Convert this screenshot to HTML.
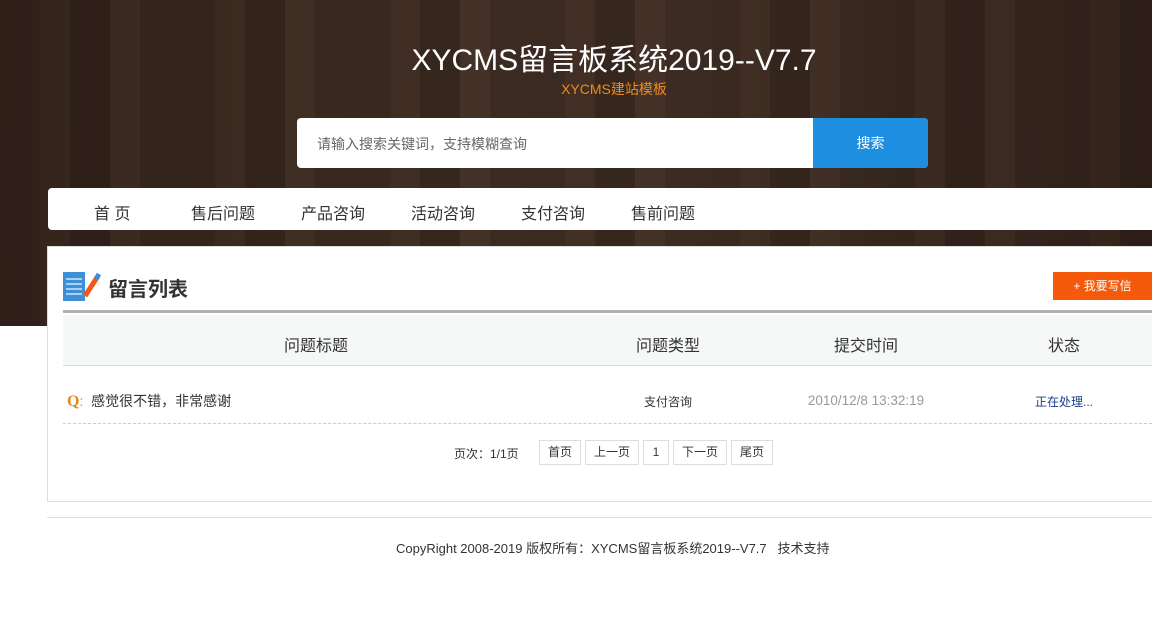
<!DOCTYPE html>
<html><head><meta charset="utf-8"><style>
*{margin:0;padding:0;box-sizing:border-box}
body{width:1152px;height:637px;background:#fff;font-family:"Liberation Sans","Noto Sans CJK SC",sans-serif;position:relative;overflow:hidden;color:#333}
.bg{position:absolute;left:0;top:0;width:1152px;height:326px;background:repeating-linear-gradient(90deg,#3a2a21 0 40px,#412f25 40px 70px,#36271e 70px 110px,#443228 110px 140px,#3b2b22 140px 175px);}
.bg:after{content:"";position:absolute;inset:0;background:linear-gradient(90deg,rgba(20,10,5,.3),rgba(0,0,0,0) 40%,rgba(0,0,0,0) 60%,rgba(20,10,5,.3))}
.t1{position:absolute;top:35px;left:0;width:1228px;text-align:center;color:#fff;font-size:30px}
.t2{position:absolute;top:79px;left:0;width:1228px;text-align:center;color:#f08a1c;font-size:14px}
.search{position:absolute;left:297px;top:118px;width:631px;height:50px;background:#fff;border-radius:4px;overflow:hidden}
.search span{position:absolute;left:20px;top:16px;font-size:14px;color:#666}
.search b{position:absolute;right:0;top:0;width:115px;height:50px;background:#1e8ee0;color:#fff;font-weight:normal;font-size:14px;text-align:center;line-height:50px}
.nav{position:absolute;left:48px;top:188px;width:1110px;height:42px;background:#fff;border-radius:4px}
.nav a{position:absolute;top:12px;font-size:16px;color:#333}
.box{position:absolute;left:47px;top:246px;width:1110px;height:256px;background:#fff;border:1px solid #ddd}
.ttl{position:absolute;left:60px;top:273px;font-size:20px;font-weight:bold;color:#333;padding-left:48px}
.btn{position:absolute;left:1053px;top:272px;width:99px;height:28px;background:#f55a0a;color:#fff;font-size:12px;line-height:28px;text-align:center}
.line{position:absolute;left:63px;top:310px;width:1089px;height:3px;background:#b0b0b0}
.th{position:absolute;left:63px;top:315px;width:1089px;height:51px;background:#f6f8f8;border-bottom:1px solid #ddd}
.th span,.row span{position:absolute;transform:translateX(-50%);white-space:nowrap}
.th span{top:17px;font-size:16px;color:#333}
.row{position:absolute;left:63px;top:367px;width:1089px;height:57px;border-bottom:1px dashed #ccc;font-size:12px}
.row span{top:26px}
.pg{position:absolute;top:440px;height:25px;border:1px solid #ddd;font-size:12px;line-height:23px;text-align:center;color:#333}
</style></head><body>
<div class="bg"></div>
<div class="t1">XYCMS留言板系统2019--V7.7</div>
<div class="t2">XYCMS建站模板</div>
<div class="search"><span>请输入搜索关键词，支持模糊查询</span><b>搜索</b></div>
<div class="nav"><a style="left:46px">首 页</a><a style="left:143px">售后问题</a><a style="left:253px">产品咨询</a><a style="left:363px">活动咨询</a><a style="left:473px">支付咨询</a><a style="left:583px">售前问题</a></div>
<div class="box"></div>
<svg style="position:absolute;left:63px;top:270px" width="38" height="32"><rect x="0" y="2" width="22" height="29" fill="#3d8fd8"/><g stroke="#cfe6ff" stroke-width="1.5"><line x1="3" y1="9" x2="19" y2="9"/><line x1="3" y1="14" x2="19" y2="14"/><line x1="3" y1="19" x2="19" y2="19"/><line x1="3" y1="24" x2="19" y2="24"/></g><line x1="22" y1="26" x2="35" y2="6" stroke="#f05a14" stroke-width="5"/><line x1="33" y1="9" x2="36" y2="4" stroke="#3d8fd8" stroke-width="5"/></svg>
<div class="ttl">留言列表</div>
<div class="btn">+ 我要写信</div>
<div class="line"></div>
<div class="th"><span style="left:253px">问题标题</span><span style="left:605px">问题类型</span><span style="left:803px">提交时间</span><span style="left:1001px">状态</span></div>
<div class="row"><span style="left:4px;transform:none;top:24px;font-size:14px;color:#333"><b style="color:#e08a1c;font-family:'Liberation Serif',serif;font-size:16px">Q</b><span style="position:static;transform:none;color:#e08a1c">:</span>&nbsp; 感觉很不错，非常感谢</span><span style="left:605px">支付咨询</span><span style="left:803px;color:#999;font-size:13.5px">2010/12/8 13:32:19</span><span style="left:1001px;color:#1a3c8c">正在处理...</span></div>
<div style="position:absolute;left:454px;top:445px;font-size:12px">页次：1/1页</div>
<div class="pg" style="left:539px;width:42px">首页</div><div class="pg" style="left:585px;width:54px">上一页</div><div class="pg" style="left:643px;width:26px">1</div><div class="pg" style="left:673px;width:54px">下一页</div><div class="pg" style="left:731px;width:42px">尾页</div>
<div style="position:absolute;left:47px;top:517px;width:1105px;border-top:1px solid #ddd"></div>
<div style="position:absolute;left:396px;top:538px;font-size:13px;white-space:nowrap">CopyRight 2008-2019 版权所有：XYCMS留言板系统2019--V7.7 &nbsp; 技术支持</div>
</body></html>
